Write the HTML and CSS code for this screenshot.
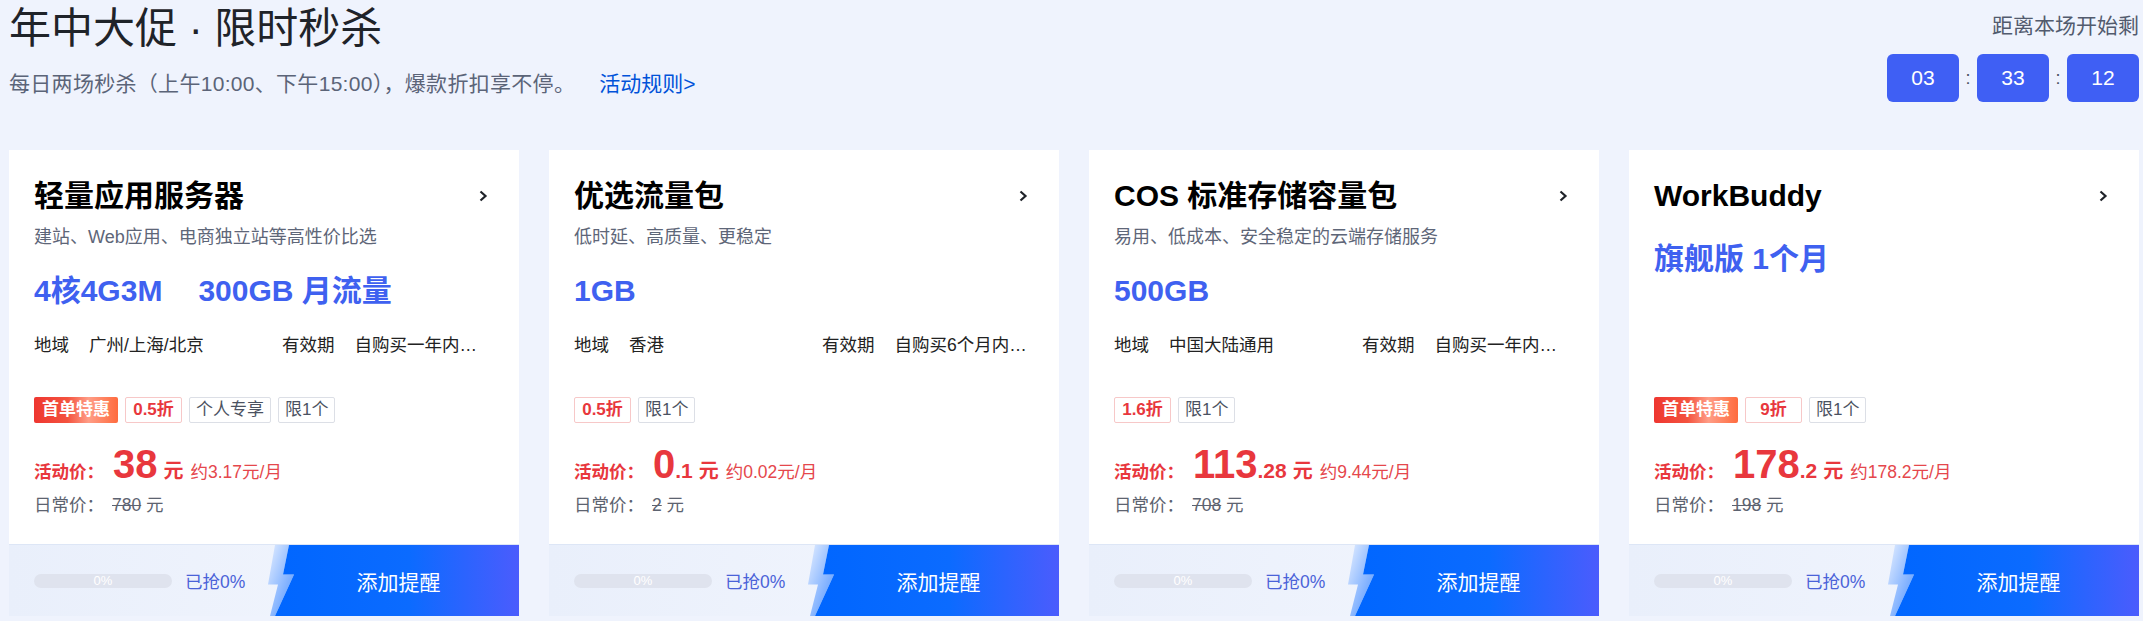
FILE: index.html
```html
<!DOCTYPE html>
<html lang="zh-CN">
<head>
    <meta charset="UTF-8">
    <meta name="viewport" content="width=device-width, initial-scale=1.0">
    <title>年中大促 · 限时秒杀</title>
    <link rel="stylesheet" href="styles.css">
</head>
<body>
    <div class="page">
        <div class="header">
            <div class="intro">
                <h1 class="title">年中大促 · 限时秒杀</h1>
                <p class="desc">每日两场秒杀（上午10:00、下午15:00），爆款折扣享不停。<a class="rules" href="#">活动规则&gt;</a></p>
            </div>
            <div class="countdown">
                <div class="countdown-label">距离本场开始剩</div>
                <div class="countdown-time">
                    <span class="digit">03</span><span class="colon">:</span>
                    <span class="digit">33</span><span class="colon">:</span>
                    <span class="digit">12</span>
                </div>
            </div>
        </div>

        <div class="cards">
            <!-- 轻量应用服务器 -->
            <div class="card">
                <div class="card-body">
                    <div class="card-head">
                        <h2 class="card-title">轻量应用服务器</h2>
                        <svg class="arrow" viewBox="0 0 20 20"><path d="M6.5 5.5L11.5 10L6.5 14.5"/></svg>
                    </div>
                    <p class="card-desc">建站、Web应用、电商独立站等高性价比选</p>
                    <div class="spec"><span>4核4G3M</span><span>300GB 月流量</span></div>
                    <div class="info">
                        <div class="info-item"><span class="info-label">地域</span><span class="info-value">广州/上海/北京</span></div>
                        <div class="info-item"><span class="info-label">有效期</span><span class="info-value">自购买一年内有效</span></div>
                    </div>
                    <div class="deal">
                        <div class="tags">
                            <span class="tag tag-hot">首单特惠</span>
                            <span class="tag tag-off">0.5折</span>
                            <span class="tag">个人专享</span>
                            <span class="tag">限1个</span>
                        </div>
                        <div class="price">
                            <span class="price-label">活动价：</span>
                            <span class="price-int">38</span>
                            <span class="price-unit">元</span>
                            <span class="price-month">约3.17元/月</span>
                        </div>
                        <div class="regular"><span class="regular-label">日常价：</span><span class="regular-num">780</span> 元</div>
                    </div>
                </div>
                <div class="card-foot">
                    <div class="progress">0%</div>
                    <span class="grabbed">已抢0%</span>
                    <button class="remind">
                        <svg viewBox="0 0 254 72" preserveAspectRatio="none">
                            <defs>
                                <linearGradient id="bolt1" x1="0" y1="0" x2="1" y2="1">
                                    <stop offset="0" stop-color="#e4eeff"/>
                                    <stop offset="1" stop-color="#4a90ff"/>
                                </linearGradient>
                                <linearGradient id="btn1" x1="10" y1="0" x2="254" y2="0" gradientUnits="userSpaceOnUse">
                                    <stop offset="0" stop-color="#0066ff"/>
                                    <stop offset="0.55" stop-color="#0b6bff"/>
                                    <stop offset="1" stop-color="#4b5cfd"/>
                                </linearGradient>
                            </defs>
                            <polygon fill="url(#bolt1)" points="10,0 24,0 18,30 29,30 10,72 5,72 13,40 3,40"/>
                            <polygon fill="url(#btn1)" points="24,0 254,0 254,72 10,72 29,30 18,30"/>
                        </svg>
                        <span>添加提醒</span>
                    </button>
                </div>
            </div>

            <!-- 优选流量包 -->
            <div class="card">
                <div class="card-body">
                    <div class="card-head">
                        <h2 class="card-title">优选流量包</h2>
                        <svg class="arrow" viewBox="0 0 20 20"><path d="M6.5 5.5L11.5 10L6.5 14.5"/></svg>
                    </div>
                    <p class="card-desc">低时延、高质量、更稳定</p>
                    <div class="spec"><span>1GB</span></div>
                    <div class="info">
                        <div class="info-item"><span class="info-label">地域</span><span class="info-value">香港</span></div>
                        <div class="info-item"><span class="info-label">有效期</span><span class="info-value">自购买6个月内有效</span></div>
                    </div>
                    <div class="deal">
                        <div class="tags">
                            <span class="tag tag-off">0.5折</span>
                            <span class="tag">限1个</span>
                        </div>
                        <div class="price">
                            <span class="price-label">活动价：</span>
                            <span class="price-int">0</span><span class="price-dec">.1</span>
                            <span class="price-unit">元</span>
                            <span class="price-month">约0.02元/月</span>
                        </div>
                        <div class="regular"><span class="regular-label">日常价：</span><span class="regular-num">2</span> 元</div>
                    </div>
                </div>
                <div class="card-foot">
                    <div class="progress">0%</div>
                    <span class="grabbed">已抢0%</span>
                    <button class="remind">
                        <svg viewBox="0 0 254 72" preserveAspectRatio="none">
                            <polygon fill="url(#bolt1)" points="10,0 24,0 18,30 29,30 10,72 5,72 13,40 3,40"/>
                            <polygon fill="url(#btn1)" points="24,0 254,0 254,72 10,72 29,30 18,30"/>
                        </svg>
                        <span>添加提醒</span>
                    </button>
                </div>
            </div>

            <!-- COS 标准存储容量包 -->
            <div class="card">
                <div class="card-body">
                    <div class="card-head">
                        <h2 class="card-title">COS 标准存储容量包</h2>
                        <svg class="arrow" viewBox="0 0 20 20"><path d="M6.5 5.5L11.5 10L6.5 14.5"/></svg>
                    </div>
                    <p class="card-desc">易用、低成本、安全稳定的云端存储服务</p>
                    <div class="spec"><span>500GB</span></div>
                    <div class="info">
                        <div class="info-item"><span class="info-label">地域</span><span class="info-value">中国大陆通用</span></div>
                        <div class="info-item"><span class="info-label">有效期</span><span class="info-value">自购买一年内有效</span></div>
                    </div>
                    <div class="deal">
                        <div class="tags">
                            <span class="tag tag-off">1.6折</span>
                            <span class="tag">限1个</span>
                        </div>
                        <div class="price">
                            <span class="price-label">活动价：</span>
                            <span class="price-int">113</span><span class="price-dec">.28</span>
                            <span class="price-unit">元</span>
                            <span class="price-month">约9.44元/月</span>
                        </div>
                        <div class="regular"><span class="regular-label">日常价：</span><span class="regular-num">708</span> 元</div>
                    </div>
                </div>
                <div class="card-foot">
                    <div class="progress">0%</div>
                    <span class="grabbed">已抢0%</span>
                    <button class="remind">
                        <svg viewBox="0 0 254 72" preserveAspectRatio="none">
                            <polygon fill="url(#bolt1)" points="10,0 24,0 18,30 29,30 10,72 5,72 13,40 3,40"/>
                            <polygon fill="url(#btn1)" points="24,0 254,0 254,72 10,72 29,30 18,30"/>
                        </svg>
                        <span>添加提醒</span>
                    </button>
                </div>
            </div>

            <!-- WorkBuddy -->
            <div class="card">
                <div class="card-body">
                    <div class="card-head">
                        <h2 class="card-title">WorkBuddy</h2>
                        <svg class="arrow" viewBox="0 0 20 20"><path d="M6.5 5.5L11.5 10L6.5 14.5"/></svg>
                    </div>
                    <div class="spec"><span>旗舰版 1个月</span></div>
                    <div class="deal">
                        <div class="tags">
                            <span class="tag tag-hot">首单特惠</span>
                            <span class="tag tag-off">9折</span>
                            <span class="tag">限1个</span>
                        </div>
                        <div class="price">
                            <span class="price-label">活动价：</span>
                            <span class="price-int">178</span><span class="price-dec">.2</span>
                            <span class="price-unit">元</span>
                            <span class="price-month">约178.2元/月</span>
                        </div>
                        <div class="regular"><span class="regular-label">日常价：</span><span class="regular-num">198</span> 元</div>
                    </div>
                </div>
                <div class="card-foot">
                    <div class="progress">0%</div>
                    <span class="grabbed">已抢0%</span>
                    <button class="remind">
                        <svg viewBox="0 0 254 72" preserveAspectRatio="none">
                            <polygon fill="url(#bolt1)" points="10,0 24,0 18,30 29,30 10,72 5,72 13,40 3,40"/>
                            <polygon fill="url(#btn1)" points="24,0 254,0 254,72 10,72 29,30 18,30"/>
                        </svg>
                        <span>添加提醒</span>
                    </button>
                </div>
            </div>
        </div>
    </div>
</body>
</html>
```

FILE: styles.css
```css
body {
    margin: 0;
    background-color: #eff3fd;
    font-family: "Liberation Sans", "Noto Sans CJK SC", sans-serif;
    color: #222;
}

.page {
    padding: 4px 4px 0 9px;
}

/* En-tête */
.header {
    display: flex;
    justify-content: space-between;
    align-items: flex-start;
    height: 146px;
}

.title {
    margin: 0;
    font-size: 42px;
    line-height: 50px;
    font-weight: normal;
    color: #1f2329;
}

.desc {
    margin: 16px 0 0;
    font-size: 21px;
    line-height: 28px;
    letter-spacing: 0.3px;
    color: #5b6478;
}

.rules {
    margin-left: 24px;
    letter-spacing: 0;
    color: #0052d9;
    text-decoration: none;
}

.countdown {
    display: flex;
    flex-direction: column;
    align-items: flex-end;
    padding-top: 8px;
}

.countdown-label {
    font-size: 21px;
    line-height: 28px;
    color: #525b6e;
}

.countdown-time {
    display: flex;
    align-items: center;
    margin-top: 14px;
}

.digit {
    display: flex;
    align-items: center;
    justify-content: center;
    width: 72px;
    height: 48px;
    border-radius: 6px;
    background-color: #3f5ff4;
    color: #fff;
    font-size: 21px;
}

.colon {
    width: 18px;
    text-align: center;
    font-size: 18px;
    color: #4e5566;
}

/* Cartes */
.cards {
    display: grid;
    grid-template-columns: repeat(4, 510px);
    gap: 30px;
}

.card {
    display: flex;
    flex-direction: column;
    background-color: #fff;
}

.card-body {
    display: flex;
    flex-direction: column;
    height: 394px;
    padding: 25px 25px 27px;
    box-sizing: border-box;
}

.card-head {
    display: flex;
    justify-content: space-between;
    align-items: center;
    height: 42px;
}

.card-title {
    margin: 0;
    font-size: 30px;
    line-height: 42px;
    font-weight: bold;
    color: #000;
}

.arrow {
    width: 20px;
    height: 20px;
    fill: none;
    stroke: #1f2329;
    stroke-width: 2.2;
}

.card-desc {
    margin: 8px 0 0;
    font-size: 18px;
    line-height: 24px;
    color: #5e6678;
}

.spec {
    display: flex;
    gap: 36px;
    margin-top: 21px;
    font-size: 30px;
    line-height: 42px;
    font-weight: bold;
    color: #3f61f0;
}

.info {
    display: grid;
    grid-template-columns: 248px 208px;
    margin-top: 21px;
    font-size: 17.5px;
    line-height: 24px;
    color: #222;
}

.info-item {
    display: flex;
    gap: 20px;
    min-width: 0;
}

.info-label {
    flex: none;
}

.info-value {
    overflow: hidden;
    text-overflow: ellipsis;
    white-space: nowrap;
}

.deal {
    margin-top: auto;
}

.tags {
    display: flex;
    gap: 7px;
}

.tag {
    height: 26px;
    padding: 0 6px;
    border: 1px solid #dcdfe6;
    border-radius: 2px;
    box-sizing: border-box;
    font-size: 17px;
    line-height: 24px;
    color: #4b5261;
}

.tag-hot {
    border: none;
    line-height: 26px;
    padding: 0 8px;
    font-weight: bold;
    color: #fff;
    background: linear-gradient(90deg, #ee3630 0%, #f4533f 40%, #ff9d86 65%, #ff6b3e 100%);
}

.tag-off {
    min-width: 57px;
    text-align: center;
    border-color: #f7c8c8;
    font-weight: bold;
    color: #e8373d;
}

.price {
    display: flex;
    align-items: baseline;
    margin-top: 17px;
    color: #e8373d;
}

.price-label {
    margin-right: 9px;
    font-size: 17.5px;
    line-height: 24px;
    font-weight: bold;
}

.price-int {
    font-size: 40px;
    line-height: 48px;
    font-weight: bold;
}

.price-dec {
    font-size: 21px;
    font-weight: bold;
}

.price-unit {
    margin-left: 6px;
    font-size: 20px;
    font-weight: bold;
}

.price-month {
    margin-left: 7px;
    font-size: 17.5px;
    color: #e5474c;
}

.regular {
    margin-top: 5px;
    font-size: 17.5px;
    line-height: 24px;
    color: #5d6370;
}

.regular-label {
    margin-right: 8px;
}

.regular-num {
    text-decoration: line-through;
}

/* Pied de carte */
.card-foot {
    display: flex;
    align-items: center;
    height: 72px;
    border-top: 1px solid #dde6f6;
    box-sizing: border-box;
    background: linear-gradient(90deg, #e9effb, #f4f7fe);
}

.progress {
    width: 138px;
    height: 14px;
    margin-left: 25px;
    border-radius: 7px;
    background-color: #dfe3ee;
    font-size: 13px;
    line-height: 14px;
    text-align: center;
    color: #fff;
}

.grabbed {
    margin-left: 13px;
    font-size: 17.5px;
    color: #4a62d8;
}

.remind {
    position: relative;
    align-self: stretch;
    width: 254px;
    margin-left: auto;
    padding: 0 0 0 13px;
    border: none;
    background: none;
    font-family: inherit;
    font-size: 21px;
    color: #fff;
    cursor: pointer;
}

.remind svg {
    position: absolute;
    left: 0;
    top: 0;
    width: 100%;
    height: 100%;
}

.remind span {
    position: relative;
}
```
